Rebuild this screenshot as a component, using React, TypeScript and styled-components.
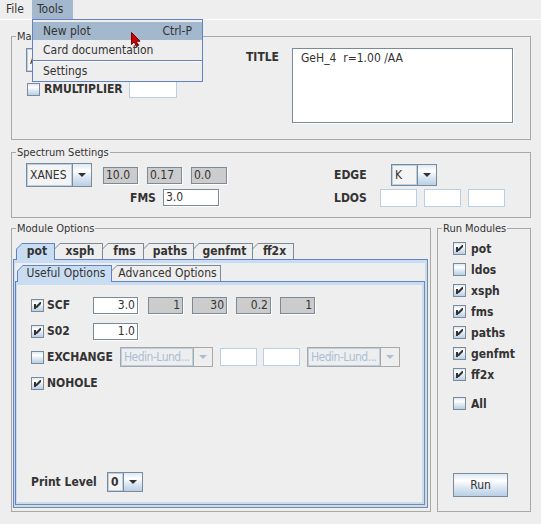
import React from 'react';
import styled, { createGlobalStyle } from 'styled-components';

const FONT = `"DejaVu Sans Condensed", "DejaVu Sans", "Liberation Sans", sans-serif`;
const INK = '#333333';
const DARK = '#7a8a99';
const BLUE = '#6382bf';
const LIGHT = '#b8cfe5';
const SELECT = '#a3b8cc';
const CONTENT = '#c8ddf2';
const GRADIENT =
  'linear-gradient(to bottom, #dde8f3 0%, #ffffff 30%, #dde8f3 60%, #b8cfe5 100%)';

const GlobalStyle = createGlobalStyle`
  html, body { margin: 0; padding: 0; background: #eeeeee; }
  body {
    font-family: ${FONT};
    font-stretch: condensed;
    font-size: 12px;
    color: ${INK};
  }
  *, *::before, *::after { box-sizing: border-box; }
`;

const Window = styled.div`
  position: relative;
  width: 541px;
  height: 524px;
  overflow: hidden;
  background: #eeeeee;
  display: flex;
  flex-direction: column;
`;

/* ---------- menu ---------- */
const MenuBar = styled.div`
  height: 20px;
  flex: none;
  display: flex;
  border-bottom: 1px solid #ffffff;
`;

const MenuTitle = styled.div<{ $active?: boolean; $w: number }>`
  width: ${p => p.$w}px;
  padding-left: ${p => (p.$active ? 5 : 6)}px;
  line-height: 19px;
  height: 19px;
  background: ${p => (p.$active ? SELECT : 'transparent')};
`;

const Popup = styled.div`
  position: absolute;
  left: 32px;
  top: 19px;
  width: 171px;
  border: 1px solid ${BLUE};
  background: #eeeeee;
  padding: 2px 0 1px;
  z-index: 10;
`;

const PopupItem = styled.div<{ $sel?: boolean; $h: number }>`
  height: ${p => p.$h}px;
  display: flex;
  align-items: center;
  justify-content: space-between;
  padding: 0 10px;
  background: ${p => (p.$sel ? SELECT : 'transparent')};
`;

const PopupSep = styled.div`
  height: 2px;
  border-top: 1px solid ${BLUE};
  background: #ffffff;
`;

const Cursor = styled.svg`
  position: absolute;
  left: 131px;
  top: 32px;
  z-index: 20;
`;

/* ---------- layout ---------- */
const Content = styled.div`
  flex: 1;
  display: flex;
  flex-direction: column;
  padding: 10px 10px 0 11px;
`;

const Group = styled.fieldset<{ $mt?: number; $w?: number }>`
  margin: ${p => p.$mt ?? 0}px 0 0 0;
  padding: 0;
  border: 1px solid #a8a8a8;
  min-width: 0;
  ${p => (p.$w ? `width: ${p.$w}px; flex: none;` : '')}
`;

const Legend = styled.legend`
  margin-left: 4px;
  padding: 0 1px;
  line-height: 13px;
  font-size: 11px;
`;

const GroupBody = styled.div<{ $pad: string }>`
  padding: ${p => p.$pad};
`;

const Bold = styled.span<{ $w?: number }>`
  font-weight: bold;
  white-space: nowrap;
  ${p => (p.$w ? `width: ${p.$w}px; flex: none;` : '')}
`;

/* ---------- controls ---------- */
const CheckBoxBox = styled.span`
  flex: none;
  width: 13px;
  height: 13px;
  border: 1px solid ${DARK};
  background: ${GRADIENT};
  display: inline-flex;
`;

const Check = ({ checked }: { checked?: boolean }) => (
  <CheckBoxBox>
    {checked && (
      <svg width="11" height="11" viewBox="0 0 11 11">
        <rect x="2" y="4" width="2" height="5" fill={INK} />
        <polygon points="4,6 8,2 9,2 9,4 5,8 4,8" fill={INK} />
      </svg>
    )}
  </CheckBoxBox>
);

const CheckItem = styled.div<{ $w?: number; $gap?: number }>`
  display: flex;
  align-items: center;
  gap: ${p => p.$gap ?? 4}px;
  ${p => (p.$w ? `width: ${p.$w}px; flex: none;` : '')}
`;

type FieldKind = 'edit' | 'gray' | 'off';
const Field = styled.div<{ $w: number; $kind?: FieldKind; $right?: boolean; $ml?: number }>`
  flex: none;
  width: ${p => (p.$kind === 'off' ? p.$w : p.$w - 1)}px;
  height: ${p => (p.$kind === 'off' ? 18 : 17)}px;
  margin-left: ${p => p.$ml ?? 0}px;
  margin-right: ${p => (p.$kind === 'off' ? 0 : 1)}px;
  border: 1px solid ${p => (p.$kind === 'off' ? LIGHT : DARK)};
  box-shadow: ${p => (p.$kind === 'off' ? 'none' : '1px 1px 0 #ffffff')};
  background: ${p => (p.$kind === 'gray' ? '#cccccc' : '#ffffff')};
  padding: 0 2px;
  line-height: 15px;
  text-align: ${p => (p.$right ? 'right' : 'left')};
  white-space: nowrap;
  overflow: hidden;
`;

const ComboBox = styled.div<{ $w: number; $h: number; $off?: boolean; $ml?: number }>`
  flex: none;
  display: flex;
  width: ${p => p.$w}px;
  height: ${p => p.$h}px;
  margin-left: ${p => p.$ml ?? 0}px;
  border: 1px solid ${p => (p.$off ? '#a8a8a8' : DARK)};
`;

const ComboValue = styled.div<{ $off?: boolean; $bold?: boolean }>`
  flex: 1;
  min-width: 0;
  display: flex;
  align-items: center;
  padding-left: 2px;
  border: 1px solid ${LIGHT};
  background: ${p => (p.$off ? '#eeeeee' : '#f4f4f4')};
  color: ${p => (p.$off ? '#a9bfd9' : INK)};
  font-weight: ${p => (p.$bold ? 'bold' : 'normal')};
  letter-spacing: ${p => (p.$off ? '-0.5px' : '0')};
  white-space: nowrap;
  overflow: hidden;
`;

const ComboArrow = styled.div<{ $off?: boolean }>`
  flex: none;
  width: 19px;
  display: flex;
  align-items: center;
  justify-content: center;
  border-left: 1px solid ${p => (p.$off ? '#a8a8a8' : DARK)};
  background: ${p => (p.$off ? '#eeeeee' : GRADIENT)};
`;

const Combo = ({
  w,
  h,
  value,
  off,
  bold,
  ml,
}: {
  w: number;
  h: number;
  value: string;
  off?: boolean;
  bold?: boolean;
  ml?: number;
}) => (
  <ComboBox $w={w} $h={h} $off={off} $ml={ml}>
    <ComboValue $off={off} $bold={bold}>
      {value}
    </ComboValue>
    <ComboArrow $off={off}>
      <svg width="8" height="4" viewBox="0 0 8 4">
        <path d="M0 0H8L4 4Z" fill={off ? '#a9bfd9' : INK} />
      </svg>
    </ComboArrow>
  </ComboBox>
);

const Button = styled.div`
  width: 55px;
  height: 24px;
  flex: none;
  border: 1px solid ${DARK};
  background: ${GRADIENT};
  display: flex;
  align-items: center;
  justify-content: center;
`;

/* ---------- main settings ---------- */
const MainRow = styled.div`
  display: flex;
  align-items: flex-start;
`;

const MainLeft = styled.div`
  width: 220px;
  flex: none;
  display: flex;
  flex-direction: column;
  align-items: flex-start;
`;

const MainCheckRow = styled.div`
  display: flex;
  align-items: center;
  height: 18px;
  margin-top: 8px;
  padding-left: 1px;
  gap: 6px;
`;

const TitleLabel = styled(Bold)`
  width: 46px;
  flex: none;
  padding-top: 2px;
`;

const TitleArea = styled.div`
  width: 221px;
  height: 75px;
  flex: none;
  border: 1px solid ${DARK};
  box-shadow: 1px 1px 0 #ffffff;
  background: #ffffff;
  padding: 2px 8px;
  line-height: 15px;
  white-space: pre;
`;

/* ---------- spectrum ---------- */
const SpecRow = styled.div<{ $h: number; $mt?: number }>`
  display: flex;
  align-items: center;
  height: ${p => p.$h}px;
  margin-top: ${p => p.$mt ?? 0}px;
`;

const SpecLeft = styled.div<{ $pl: number }>`
  width: 322px;
  flex: none;
  display: flex;
  align-items: center;
  padding-left: ${p => p.$pl}px;
`;

/* ---------- bottom ---------- */
const BottomRow = styled.div`
  display: flex;
  gap: 6px;
  margin-top: 4px;
  height: 290px;
`;

const Pane = styled.div<{ $h?: number }>`
  display: flex;
  flex-direction: column;
  background: #eeeeee;
  ${p => (p.$h ? `height: ${p.$h}px;` : 'flex: 1;')}
`;

const TabStrip = styled.div<{ $pl: number; $pt: number }>`
  display: flex;
  align-items: flex-end;
  padding-left: ${p => p.$pl}px;
  padding-top: ${p => p.$pt}px;
  flex: none;
`;

const Tab = styled.div<{ $sel?: boolean; $w: number; $first?: boolean }>`
  position: relative;
  z-index: ${p => (p.$sel ? 2 : 1)};
  width: ${p => p.$w}px;
  height: ${p => (p.$sel ? 17 : 16)}px;
  margin-bottom: ${p => (p.$sel ? -1 : 0)}px;
  margin-left: ${p => (p.$first ? 0 : -1)}px;
  padding: 1px 1px 0 1px;
  background: ${p => (p.$sel ? BLUE : DARK)};
  clip-path: polygon(0 100%, 0 6px, 6px 0, 100% 0, 100% 100%);
`;

const TabFace = styled.div<{ $sel?: boolean; $bold?: boolean }>`
  height: 100%;
  background: ${p => (p.$sel ? CONTENT : '#eeeeee')};
  clip-path: polygon(0 100%, 0 5px, 5px 0, 100% 0, 100% 100%);
  padding-left: 3px;
  text-align: center;
  line-height: 15px;
  font-weight: ${p => (p.$bold ? 'bold' : 'normal')};
  white-space: nowrap;
`;

const PaneBody = styled.div`
  flex: 1;
  display: flex;
  flex-direction: column;
  border: 1px solid;
  border-color: ${BLUE} ${DARK} ${DARK} ${BLUE};
  background: ${CONTENT};
  padding: 3px 2px 2px 1px;
`;

const OptionsPanel = styled.div`
  flex: 1;
  display: flex;
  flex-direction: column;
  gap: 6px;
  background: #eeeeee;
  padding: 10px 0 10px 14px;
`;

const OptRow = styled.div<{ $push?: boolean }>`
  display: flex;
  align-items: center;
  height: 20px;
  ${p => (p.$push ? 'margin-top: auto;' : '')}
`;

const RunCol = styled.div`
  height: 262px;
  padding: 3px 0 0 15px;
  display: flex;
  flex-direction: column;
`;

const RunItem = styled(CheckItem)<{ $mt?: number }>`
  height: 21px;
  margin-top: ${p => p.$mt ?? 0}px;
  gap: 5px;
`;

const ButtonRow = styled.div`
  margin-top: auto;
  display: flex;
`;

const outerTabs = [
  { name: 'pot', w: 39 },
  { name: 'xsph', w: 49 },
  { name: 'fms', w: 42 },
  { name: 'paths', w: 51 },
  { name: 'genfmt', w: 60 },
  { name: 'ff2x', w: 42 },
];

const runModules = [
  { name: 'pot', on: true },
  { name: 'ldos', on: false },
  { name: 'xsph', on: true },
  { name: 'fms', on: true },
  { name: 'paths', on: true },
  { name: 'genfmt', on: true },
  { name: 'ff2x', on: true },
];

export default function App() {
  return (
    <>
      <GlobalStyle />
      <Window>
        <MenuBar>
          <MenuTitle $w={32}>File</MenuTitle>
          <MenuTitle $w={41} $active>
            Tools
          </MenuTitle>
        </MenuBar>

        <Content>
          <Group>
            <Legend>Main Settings</Legend>
            <GroupBody $pad="5px 15px 16px 14px">
              <MainRow>
                <MainLeft>
                  <Combo w={90} h={24} value="ATOMS" />
                  <MainCheckRow>
                    <CheckItem>
                      <Check />
                      <Bold>RMULTIPLIER</Bold>
                    </CheckItem>
                    <Field $w={48} $kind="off" />
                  </MainCheckRow>
                </MainLeft>
                <TitleLabel>TITLE</TitleLabel>
                <TitleArea>{'GeH_4  r=1.00 /AA'}</TitleArea>
              </MainRow>
            </GroupBody>
          </Group>

          <Group $mt={6}>
            <Legend>Spectrum Settings</Legend>
            <GroupBody $pad="4px 0 10px 0">
              <SpecRow $h={24}>
                <SpecLeft $pl={14}>
                  <Combo w={66} h={24} value="XANES" />
                  <Field $w={36} $kind="gray" $ml={11}>10.0</Field>
                  <Field $w={36} $kind="gray" $ml={8}>0.17</Field>
                  <Field $w={37} $kind="gray" $ml={8}>0.0</Field>
                </SpecLeft>
                <Bold $w={57}>EDGE</Bold>
                <Combo w={46} h={22} value="K" />
              </SpecRow>
              <SpecRow $h={19} $mt={1}>
                <SpecLeft $pl={118}>
                  <Bold $w={33}>FMS</Bold>
                  <Field $w={57} $kind="edit">3.0</Field>
                </SpecLeft>
                <Bold $w={46}>LDOS</Bold>
                <Field $w={37} $kind="off" />
                <Field $w={37} $kind="off" $ml={7} />
                <Field $w={37} $kind="off" $ml={7} />
              </SpecRow>
            </GroupBody>
          </Group>

          <BottomRow>
            <Group $w={420}>
              <Legend>Module Options</Legend>
              <GroupBody $pad="8px 2px 3px 1px">
                <Pane $h={265}>
                  <TabStrip $pl={3} $pt={0}>
                    {outerTabs.map((t, i) => (
                      <Tab key={t.name} $w={t.w} $sel={i === 0} $first={i === 0}>
                        <TabFace $sel={i === 0} $bold>
                          {t.name}
                        </TabFace>
                      </Tab>
                    ))}
                  </TabStrip>
                  <PaneBody>
                    <Pane>
                      <TabStrip $pl={2} $pt={2}>
                        <Tab $w={95} $sel $first>
                          <TabFace $sel>Useful Options</TabFace>
                        </Tab>
                        <Tab $w={110}>
                          <TabFace>Advanced Options</TabFace>
                        </Tab>
                      </TabStrip>
                      <PaneBody>
                        <OptionsPanel>
                          <OptRow>
                            <CheckItem $w={62} $gap={3}>
                              <Check checked />
                              <Bold>SCF</Bold>
                            </CheckItem>
                            <Field $w={46} $kind="edit" $right>3.0</Field>
                            <Field $w={36} $kind="gray" $right $ml={9}>1</Field>
                            <Field $w={36} $kind="gray" $right $ml={8}>30</Field>
                            <Field $w={36} $kind="gray" $right $ml={8}>0.2</Field>
                            <Field $w={36} $kind="gray" $right $ml={8}>1</Field>
                          </OptRow>
                          <OptRow>
                            <CheckItem $w={62} $gap={3}>
                              <Check checked />
                              <Bold>S02</Bold>
                            </CheckItem>
                            <Field $w={46} $kind="edit" $right>1.0</Field>
                          </OptRow>
                          <OptRow>
                            <CheckItem $w={89} $gap={3}>
                              <Check />
                              <Bold>EXCHANGE</Bold>
                            </CheckItem>
                            <Combo w={93} h={20} value="Hedin-Lund..." off />
                            <Field $w={37} $kind="off" $ml={7} />
                            <Field $w={37} $kind="off" $ml={6} />
                            <Combo w={93} h={20} value="Hedin-Lund..." off ml={7} />
                          </OptRow>
                          <OptRow>
                            <CheckItem $gap={3}>
                              <Check checked />
                              <Bold>NOHOLE</Bold>
                            </CheckItem>
                          </OptRow>
                          <OptRow $push>
                            <Bold $w={76}>Print Level</Bold>
                            <Combo w={36} h={20} value="0" bold />
                          </OptRow>
                        </OptionsPanel>
                      </PaneBody>
                    </Pane>
                  </PaneBody>
                </Pane>
              </GroupBody>
            </Group>

            <Group $w={94}>
              <Legend>Run Modules</Legend>
              <RunCol>
                {runModules.map(m => (
                  <RunItem key={m.name}>
                    <Check checked={m.on} />
                    <Bold>{m.name}</Bold>
                  </RunItem>
                ))}
                <RunItem $mt={8}>
                  <Check />
                  <Bold>All</Bold>
                </RunItem>
                <ButtonRow>
                  <Button>Run</Button>
                </ButtonRow>
              </RunCol>
            </Group>
          </BottomRow>
        </Content>

        <Popup>
          <PopupItem $sel $h={18}>
            <span>New plot</span>
            <span>Ctrl-P</span>
          </PopupItem>
          <PopupItem $h={20}>
            <span>Card documentation</span>
          </PopupItem>
          <PopupSep />
          <PopupItem $h={18}>
            <span>Settings</span>
          </PopupItem>
        </Popup>

        <Cursor width="10" height="16" viewBox="0 0 10 16">
          <path
            d="M0.5 0.5 L0.5 12.5 L3.3 9.8 L5.3 14.6 L7.3 13.8 L5.4 9.2 L9 9.2 Z"
            fill="#d10000"
            stroke="#6e0000"
            strokeWidth="1"
            strokeLinejoin="miter"
          />
        </Cursor>
      </Window>
    </>
  );
}
